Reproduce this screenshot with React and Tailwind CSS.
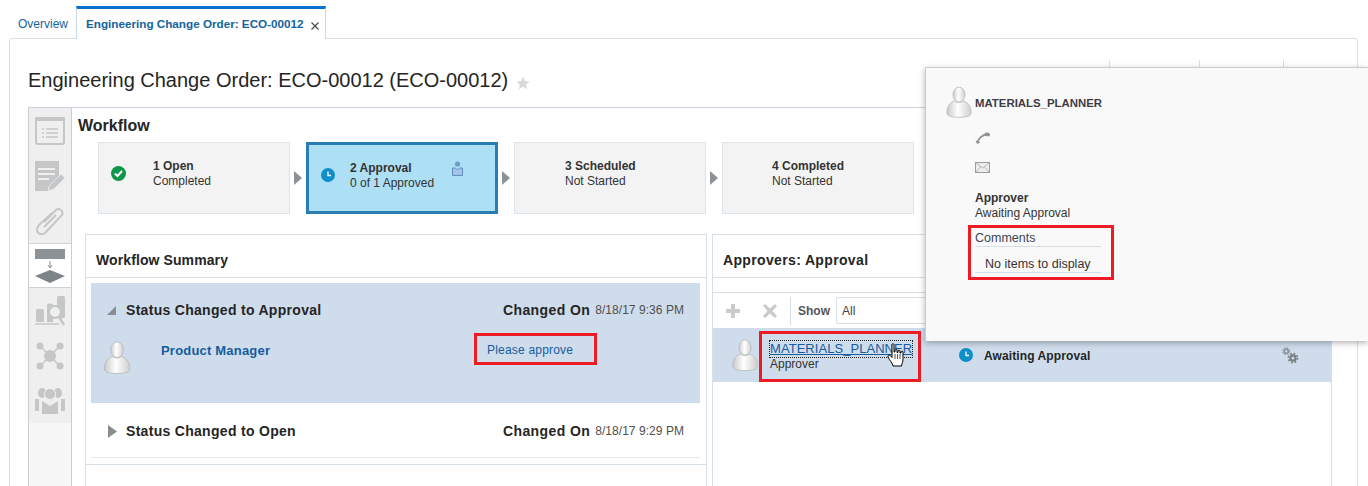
import React from "react";

function Person({ className = "" }) {
  return (
    <svg viewBox="0 0 28 34" className={className}>
      <defs>
        <linearGradient id="pg" x1="0" x2="1" y1="0" y2="0">
          <stop offset="0" stopColor="#c9c9c9" />
          <stop offset="0.45" stopColor="#ffffff" />
          <stop offset="1" stopColor="#cfcfcf" />
        </linearGradient>
      </defs>
      <ellipse cx="14" cy="9" rx="6.5" ry="8" fill="url(#pg)" stroke="#b5b5b5" strokeWidth="0.8" />
      <path d="M9 16 C3 18 1 23 1 29 C1 32 6 33.5 14 33.5 C22 33.5 27 32 27 29 C27 23 25 18 19 16 C16 18 12 18 9 16 Z" fill="url(#pg)" stroke="#b5b5b5" strokeWidth="0.8" />
    </svg>
  );
}

function Clock({ size = 14 }) {
  return (
    <svg width={size} height={size} viewBox="0 0 14 14" className="shrink-0">
      <circle cx="7" cy="7" r="7" fill="#0f8fc9" />
      <path d="M7 3.5V7.5H10" stroke="#fff" strokeWidth="1.3" fill="none" />
    </svg>
  );
}

function Arrow() {
  return (
    <svg width="8" height="14" viewBox="0 0 8 14" className="shrink-0">
      <path d="M0 0L8 7L0 14Z" fill="#8c9296" />
    </svg>
  );
}

function Step({ title, sub, icon, active, extra, textLeft }) {
  return (
    <div
      className={`relative flex h-[72px] w-[192px] shrink-0 ${
        active ? "border-[3px] border-[#2a7cb4] bg-[#addff5]" : "border border-[#dde4ea] bg-[#f3f3f3]"
      }`}
    >
      <div className="flex shrink-0 pl-[12px] pt-[23px]" style={{ width: textLeft }}>
        {icon}
      </div>
      <div className="pt-[16px] text-[12px] leading-[15px] text-[#333]">
        <div className="font-bold">{title}</div>
        <div>{sub}</div>
      </div>
      {extra}
    </div>
  );
}

function SideIcon({ children, selected }) {
  return (
    <div
      className={`flex h-[45px] items-center justify-center ${
        selected ? "border-y border-[#cfd4d8] bg-white" : ""
      }`}
    >
      {children}
    </div>
  );
}

const G = "#c4c6c7";

function Sidebar() {
  return (
    <div className="flex w-[44px] shrink-0 flex-col border-x border-[#c9ced2] bg-[#f7f7f7]">
      <div className="bg-[#efefef] pb-0">
        <SideIcon>
          <svg width="30" height="28" viewBox="0 0 30 28">
            <rect x="1" y="1" width="28" height="26" rx="2" fill="none" stroke={G} strokeWidth="2" />
            <rect x="0" y="0" width="30" height="4" fill={G} />
            <path d="M7 12h2M11 12h12M7 16h2M11 16h12M7 20h2M11 20h12" stroke={G} strokeWidth="1.4" />
          </svg>
        </SideIcon>
        <SideIcon>
          <svg width="30" height="30" viewBox="0 0 30 30">
            <path d="M0 0H24V16L13 27V30H0Z" fill={G} />
            <path d="M3 8H20M3 13H20M3 18H14" stroke="#efefef" strokeWidth="2" />
            <path d="M13 30L15 24L26 13L30 17L19 28Z" fill={G} stroke="#efefef" strokeWidth="0.8" />
          </svg>
        </SideIcon>
        <SideIcon>
          <svg width="30" height="30" viewBox="0 0 30 30">
            <path d="M9 15L21 3C24 0.5 29 4 27 8L11 25C8 29 2 27 2 23C2 21 3 19 4 18L17 6" fill="none" stroke={G} strokeWidth="2" transform="translate(0 1)" />
            <path d="M21 9L9 21" stroke={G} strokeWidth="2" />
          </svg>
        </SideIcon>
        <SideIcon selected>
          <svg width="30" height="34" viewBox="0 0 30 34">
            <rect x="0" y="0" width="30" height="10" fill="#8c9296" />
            <path d="M15 12V18M13 16L15 19L17 16" stroke="#8c9296" strokeWidth="1" fill="none" />
            <path d="M15 21L30 27L15 34L0 27Z" fill="#7d8488" />
          </svg>
        </SideIcon>
        <SideIcon>
          <svg width="30" height="30" viewBox="0 0 30 30">
            <rect x="1" y="13" width="8" height="13" rx="1.5" fill={G} />
            <path d="M12 26V9C12 7 18 7 18 9V26Z" fill={G} />
            <rect x="22" y="0" width="8" height="22" rx="1.5" fill={G} />
            <circle cx="20" cy="16" r="6" fill="#efefef" stroke={G} strokeWidth="2" />
            <path d="M24 21L29 29" stroke={G} strokeWidth="2.4" />
            <path d="M0 28H24" stroke={G} strokeWidth="1.5" />
          </svg>
        </SideIcon>
        <SideIcon>
          <svg width="28" height="28" viewBox="0 0 28 28">
            <path d="M4 4L24 24M24 4L4 24" stroke={G} strokeWidth="1.6" />
            <circle cx="14" cy="14" r="6" fill={G} />
            <circle cx="4" cy="4" r="3.5" fill={G} />
            <circle cx="24" cy="4" r="3.5" fill={G} />
            <circle cx="4" cy="24" r="3.5" fill={G} />
            <circle cx="24" cy="24" r="3.5" fill={G} />
          </svg>
        </SideIcon>
        <SideIcon>
          <svg width="30" height="26" viewBox="0 0 30 26">
            <ellipse cx="7" cy="5" rx="4" ry="5" fill={G} />
            <ellipse cx="23" cy="5" rx="4" ry="5" fill={G} />
            <circle cx="15" cy="6" r="5.5" fill={G} stroke="#efefef" />
            <path d="M0 11H4V23H0ZM26 11H30V23H26Z" fill={G} />
            <path d="M7 13L15 18L23 13V26H7Z" fill={G} />
          </svg>
        </SideIcon>
      </div>
    </div>
  );
}

function Gears() {
  return (
    <svg width="17" height="17" viewBox="0 0 17 17">
      <circle cx="4.2" cy="4.2" r="2" fill="none" stroke="#8c9296" strokeWidth="1.6" />
      <circle cx="4.2" cy="4.2" r="3.4" fill="none" stroke="#8c9296" strokeWidth="1.3" strokeDasharray="1.4 1.3" />
      <circle cx="11" cy="11" r="2.6" fill="none" stroke="#787e82" strokeWidth="2.2" />
      <circle cx="11" cy="11" r="4.6" fill="none" stroke="#787e82" strokeWidth="1.6" strokeDasharray="1.8 1.8" />
    </svg>
  );
}

function Cursor() {
  return (
    <svg width="18" height="24" viewBox="0 0 18 24" className="absolute left-[887px] top-[343px]">
      <path
        d="M5 1.5C5 .5 7 .5 7 1.5V9L8 9V7C8 6 10 6 10 7V9.5L11 9.5V8C11 7 13 7 13 8V10L14 10V9C14 8 16 8 16 9V16C16 19 15 20 14.5 23H6C5.5 20 3 18 1 14C0.5 12.5 2 11.5 3.2 12.5L5 14.5Z"
        fill="#fff"
        stroke="#000"
        strokeWidth="1"
      />
      <path d="M8 11V16M10.5 11V16M13 11V16" stroke="#000" strokeWidth="0.7" />
    </svg>
  );
}

export default function App() {
  return (
    <div className="relative h-[486px] w-[1368px] overflow-hidden bg-white font-['Liberation_Sans',Arial,sans-serif] text-[#333]">
      {/* tabs */}
      <div className="flex h-[38px] items-end pl-[18px]">
        <div className="w-[58px] pb-[6px] text-[12px] leading-[15px] text-[#14639c]">Overview</div>
        <div className="relative z-10 -mb-[1px] flex h-[33px] w-[250px] items-center border-x border-t-[3px] border-x-[#c9d8e4] border-t-[#0572ce] bg-white pl-[9px] text-[11.7px] font-bold text-[#14639c]">
          Engineering Change Order: ECO-00012
          <svg width="8" height="8" viewBox="0 0 8 8" className="ml-[7px] mt-[4px]">
            <path d="M.5.5L7.5 7.5M7.5.5L.5 7.5" stroke="#444" strokeWidth="1.1" />
          </svg>
        </div>
      </div>

      {/* main card */}
      <div className="ml-[9px] h-[460px] w-[1349px] rounded-t-[3px] border border-[#d6dfe6] pl-[18px]">
        <div className="flex h-[68px] items-center pt-[14px]">
          <h1 className="text-[20px] leading-[24px] font-normal text-[#252525]">
            Engineering Change Order: ECO-00012 (ECO-00012)
          </h1>
          <svg width="14" height="14" viewBox="0 0 24 24" className="ml-[8px] mt-[6px]">
            <path d="M12 1l3.4 7.4 8 .9-6 5.4 1.7 8L12 18.6 4.9 22.7l1.7-8-6-5.4 8-.9z" fill="#d9d9d9" />
          </svg>
        </div>

        <div className="flex h-[380px] w-[1302px] border-t border-[#c9d2da]">
          <Sidebar />
          <div className="min-w-0 flex-1 pl-[6px]">
            <div className="pt-[9px] text-[16px] leading-[18px] font-bold text-[#252525]">Workflow</div>
            <div className="mt-[7px] flex items-center gap-[4px] pl-[20px]">
              <Step
                title="1 Open"
                sub="Completed"
                textLeft={54}
                icon={
                  <svg width="15" height="15" viewBox="0 0 15 15">
                    <circle cx="7.5" cy="7.5" r="7.5" fill="#0d9647" />
                    <path d="M3.8 7.5L6.5 10L11 5" stroke="#fff" strokeWidth="2" fill="none" />
                  </svg>
                }
              />
              <Arrow />
              <Step
                active
                title="2 Approval"
                sub="0 of 1 Approved"
                textLeft={41}
                icon={<Clock />}
                extra={
                  <svg width="11" height="15" viewBox="0 0 11 15" className="absolute left-[143px] top-[16px]">
                    <circle cx="5.5" cy="3" r="2.6" fill="#6f9ccb" />
                    <path d="M.5 7H3.5L5.5 9L7.5 7H10.5V14.5H.5Z" fill="#a3c4e4" stroke="#5e8fc2" />
                  </svg>
                }
              />
              <Arrow />
              <Step title="3 Scheduled" sub="Not Started" textLeft={50} />
              <Arrow />
              <Step title="4 Completed" sub="Not Started" textLeft={49} />
            </div>

            <div className="ml-[7px] mt-[20px] flex gap-[5px]">
              {/* left panel */}
              <div className="h-[260px] w-[622px] shrink-0 border border-[#d6dfe6]">
                <div className="flex h-[43px] items-center border-b border-[#d6dfe6] pl-[10px] pt-[9px] text-[14px] font-bold tracking-[0.1px] text-[#252525]">
                  Workflow Summary
                </div>
                <div className="pl-[5px] pr-[6px] pt-[5px]">
                  <div className="h-[120px] bg-[#cfdcec] pl-[16px] pr-[16px]">
                    <div className="flex h-[54px] items-center">
                      <svg width="9" height="9" viewBox="0 0 9 9" className="mr-[10px]">
                        <path d="M9 0V9H0Z" fill="#878d91" />
                      </svg>
                      <span className="text-[14px] font-bold tracking-[0.3px] text-[#252525]">Status Changed to Approval</span>
                      <span className="ml-auto text-[14px] font-bold tracking-[0.4px] text-[#252525]">Changed On</span>
                      <span className="ml-[5px] text-[12px] tracking-[0.05px] text-[#4f4f4f]">8/18/17 9:36 PM</span>
                    </div>
                    <div className="mt-[6px] flex items-start">
                      <Person className="-mt-[2px] ml-[-4px] h-[33px] w-[28px]" />
                      <span className="ml-[30px] w-[326px] shrink-0 text-[13px] leading-[16px] font-bold tracking-[0.2px] text-[#145c9e]">Product Manager</span>
                      <span className="-mt-[1px] text-[12px] leading-[16px] tracking-[0.2px] text-[#145c9e]">Please approve</span>
                    </div>
                  </div>
                  <div className="flex h-[55px] items-center border-b border-[#e4e9ee] pl-[17px] pr-[16px] pt-[2px]">
                    <svg width="9" height="13" viewBox="0 0 9 13" className="mr-[9px]">
                      <path d="M0 0L9 6.5L0 13Z" fill="#878d91" />
                    </svg>
                    <span className="text-[14px] font-bold tracking-[0.3px] text-[#252525]">Status Changed to Open</span>
                    <span className="ml-auto text-[14px] font-bold tracking-[0.4px] text-[#252525]">Changed On</span>
                    <span className="ml-[5px] text-[12px] tracking-[0.05px] text-[#4f4f4f]">8/18/17 9:29 PM</span>
                  </div>
                </div>
                <div className="h-[7px] border-b border-[#d6dfe6]" />
              </div>

              {/* right panel */}
              <div className="h-[260px] w-[620px] shrink-0 border border-[#d6dfe6]">
                <div className="flex h-[43px] items-center border-b border-[#d6dfe6] pl-[10px] pt-[9px] text-[14px] font-bold tracking-[0.35px] text-[#252525]">
                  Approvers: Approval
                </div>
                <div className="h-[15px] border-b border-[#d6dfe6]" />
                <div className="flex h-[35px] items-center pl-[13px]">
                  <svg width="14" height="14" viewBox="0 0 14 14">
                    <path d="M5 0H9V5H14V9H9V14H5V9H0V5H5Z" fill="#c9cbcc" />
                  </svg>
                  <svg width="14" height="14" viewBox="0 0 14 14" className="ml-[23px]">
                    <path d="M2 0L7 4.5L12 0L14 2L9.5 7L14 12L12 14L7 9.5L2 14L0 12L4.5 7L0 2Z" fill="#c9cbcc" />
                  </svg>
                  <div className="ml-[13px] h-[28px] w-px bg-[#d6dfe6]" />
                  <span className="ml-[7px] text-[12px] font-bold text-[#555]">Show</span>
                  <div className="ml-[6px] flex h-[27px] w-[100px] items-center rounded-[2px] border border-[#d6dfe6] pl-[5px] text-[12px] text-[#444]">All</div>
                </div>
                <div className="flex h-[54px] items-center bg-[#cfdcec]">
                  <Person className="ml-[18px] h-[32px] w-[28px] shrink-0" />
                  <div className="ml-[11px] w-[189px] shrink-0 pt-[1px]">
                    <div className="w-fit text-[13px] leading-[16px] tracking-[0.05px] text-[#145c9e] underline outline-1 outline-[#222] outline-dotted">MATERIALS_PLANNER</div>
                    <div className="text-[12px] leading-[14px] text-[#333]">Approver</div>
                  </div>
                  <Clock />
                  <span className="ml-[11px] w-[298px] shrink-0 whitespace-nowrap pt-[1px] text-[12px] font-bold tracking-[0.1px] text-[#252525]">Awaiting Approval</span>
                  <Gears />
                </div>
              </div>
            </div>
          </div>
        </div>
      </div>

      {/* faint header ticks above popup */}
      <div className="absolute left-[1109px] top-[60px] h-[8px] w-px bg-[#d6dfe6]" />
      <div className="absolute left-[1199px] top-[60px] h-[8px] w-px bg-[#d6dfe6]" />
      <div className="absolute left-[1283px] top-[60px] h-[8px] w-px bg-[#d6dfe6]" />

      {/* popup */}
      <div className="absolute left-[925px] top-[67px] h-[274px] w-[443px] border-l border-t border-[#c6ccd1] bg-[#f9f9f9] pl-[20px] pt-[18px] shadow-[0_2px_6px_rgba(0,0,0,0.3)]">
        <div className="flex items-center">
          <Person className="h-[32px] w-[26px]" />
          <span className="ml-[3px] mt-[3px] text-[11.4px] font-bold text-[#3d3d47]">MATERIALS_PLANNER</span>
        </div>
        <div className="ml-[29px] mt-[14px]">
          <svg width="15" height="12" viewBox="0 0 15 12" className="block">
            <path d="M2.5 10.5C3 7 7 2.8 12 2.5" fill="none" stroke="#8f9396" strokeWidth="1.8" />
            <path d="M0.5 9.5L3 8L5 10.5L2.5 12Z" fill="#8f9396" />
            <path d="M9.5 1.5C11 0 14 0 15 2.5L14.5 4.2H11.5L10 3.2Z" fill="#8f9396" />
          </svg>
          <svg width="15" height="11" viewBox="0 0 15 11" className="mt-[18px] block">
            <rect x=".5" y=".5" width="14" height="10" fill="#eee" stroke="#9a9ea1" />
            <path d="M.5.5L7.5 6L14.5.5M.5 10.5L5.5 5M14.5 10.5L9.5 5" fill="none" stroke="#9a9ea1" strokeWidth=".7" />
          </svg>
          <div className="mt-[18px] text-[12px] leading-[15px] font-bold text-[#333]">Approver</div>
          <div className="text-[12px] leading-[15px] text-[#333]">Awaiting Approval</div>
          <div className="mt-[10px] w-[126px] border-b border-[#d6dfe6] text-[12.5px] leading-[15px] text-[#3d4654]">Comments</div>
          <div className="w-[126px] border-b border-[#d6dfe6] pl-[10px] pt-[10px] text-[12.5px] leading-[15px] text-[#333]">No items to display</div>
        </div>
      </div>

      {/* red annotations */}
      <div className="absolute left-[474px] top-[333px] h-[32px] w-[123px] border-[3px] border-[#ed1c24]" />
      <div className="absolute left-[759px] top-[331px] h-[51px] w-[162px] border-[3px] border-[#ed1c24]" />
      <div className="absolute left-[968px] top-[225px] h-[55px] w-[146px] border-[3px] border-[#ed1c24]" />
      <Cursor />
    </div>
  );
}
